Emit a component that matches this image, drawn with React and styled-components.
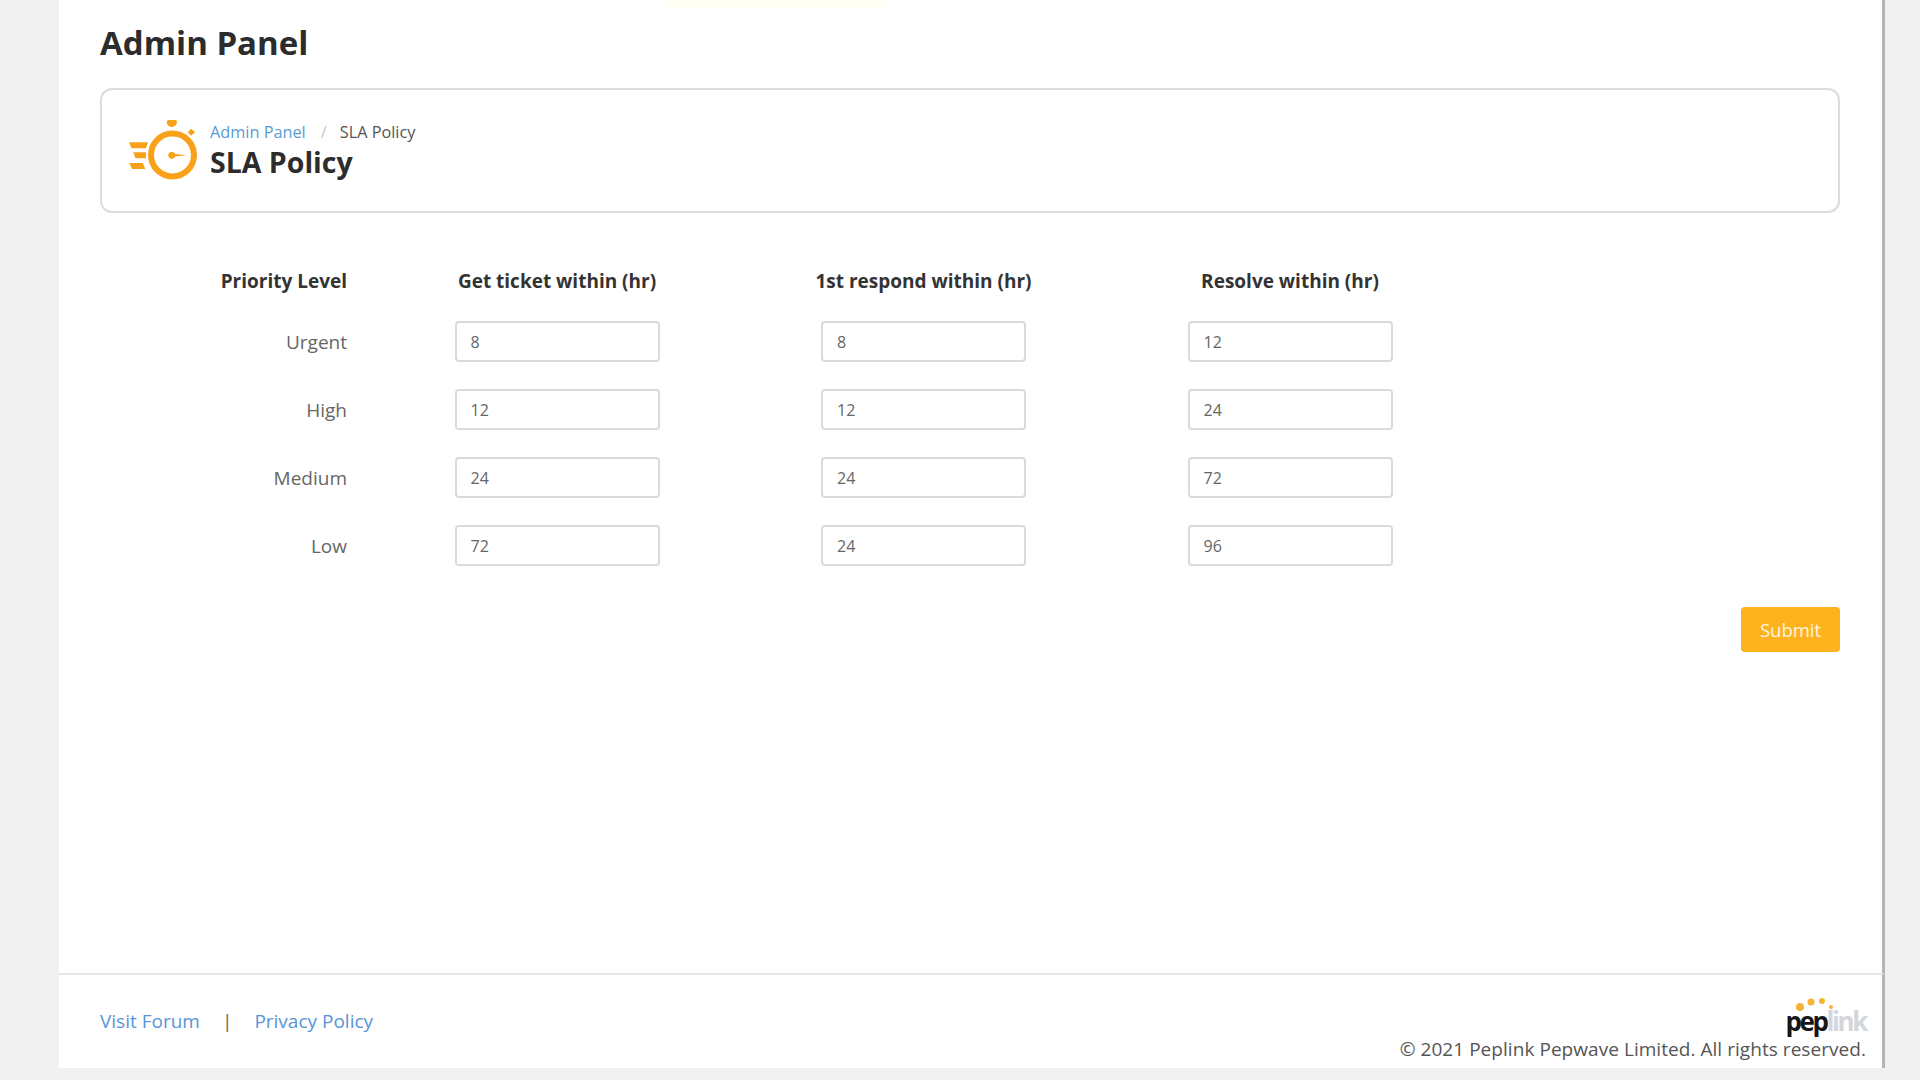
import React from 'react'
import styled, { createGlobalStyle } from 'styled-components'

const GlobalStyle = createGlobalStyle`
    html, body {
        margin: 0;
        padding: 0;
        background: #f1f1f1;
    }
    body {
        height: 1080px;
        overflow: hidden;
        font-family: "Open Sans", "Liberation Sans", sans-serif;
    }
    * {
        box-sizing: border-box;
    }
`

const Panel = styled.div`
    width: 1826px;
    margin-left: 59px;
    height: 1068px;
    display: flex;
    flex-direction: column;
    background: #fff;
`
const Main = styled.main`
    flex: 1;
    padding: 0 42px 0 41px;
    border-right: 3px solid #b4b4b4;
`
const PageTitle = styled.h1`
    margin: 0;
    height: 88px;
    line-height: 86px;
    font-size: 33px;
    font-weight: 700;
    color: #2c2c2c;
`
const HeaderCard = styled.section`
    height: 125px;
    display: flex;
    align-items: center;
    gap: 11px;
    padding: 0 0 2px 27px;
    border: 2px solid #dcdcdc;
    border-radius: 12px;
`
const IconSvg = styled.svg`
    width: 70px;
    height: 66px;
    margin-top: 3px;
    fill: #f9a11b;
`
const Breadcrumb = styled.div`
    display: flex;
    align-items: center;
    height: 24px;
    font-size: 16.300px;
    color: #555;

    a {
        color: #5a9bd5;
        text-decoration: none;
    }
    i {
        font-style: normal;
        color: #c8c8c8;
        margin: 0 13px 0 15px;
    }
`
const SectionTitle = styled.h2`
    margin: 0;
    font-size: 28.500px;
    line-height: 36px;
    font-weight: 700;
    color: #2c2c2c;
`
const Form = styled.form`
    padding-top: 56px;
    display: flex;
    flex-direction: column;
`
const Row = styled.div`
    display: flex;
    align-items: center;
    height: ${p => (p.$head ? '24px' : '41px')};
    margin-bottom: ${p => (p.$head ? '28px' : '27px')};
`
const RowLabel = styled.div`
    width: 247px;
    margin-right: 107.500px;
    text-align: right;
    font-size: 19px;
    font-weight: ${p => (p.$head ? 700 : 400)};
    color: ${p => (p.$head ? '#333' : '#666')};
`
const ColHead = styled.div`
    display: flex;
    justify-content: center;
    width: 205px;
    margin-right: 161.500px;
    font-size: 19px;
    font-weight: 700;
    white-space: nowrap;
    color: #333;
`
const HourInput = styled.input`
    width: 205px;
    height: 41px;
    margin-right: 161.500px;
    padding: 0 14px;
    border: 2px solid #dadada;
    border-radius: 4px;
    background: #fff;
    font-family: inherit;
    font-size: 16px;
    color: #666;
    outline: none;
`
const Actions = styled.div`
    display: flex;
    justify-content: flex-end;
    margin-top: 14px;
`
const SubmitButton = styled.button`
    width: 99px;
    height: 45px;
    border: 0;
    border-radius: 4px;
    background: #fdb21e;
    font-family: inherit;
    font-size: 18.500px;
    color: #fff6e0;
`
const Footer = styled.footer`
    height: 95px;
    display: flex;
    justify-content: space-between;
    padding: 0 16px 0 41px;
    border-top: 2px solid #e6e6e6;
    border-right: 3px solid #b4b4b4;
`
const FooterLinks = styled.div`
    display: flex;
    align-items: center;
    height: 94px;
    padding-bottom: 3px;
    font-size: 19px;
    color: #666;

    a {
        color: #5a94d8;
        text-decoration: none;
    }
    span {
        margin: 0 22px 0 22px;
    }
`
const FooterRight = styled.div`
    display: flex;
    flex-direction: column;
    align-items: flex-end;
    padding-top: 21px;
`
const Logo = styled.div`
    position: relative;
    width: 81px;
    height: 40px;
    font-size: 26px;
    font-weight: 700;
    letter-spacing: -2.400px;
    line-height: 32px;
    text-align: right;
    padding-top: 9px;
    white-space: nowrap;
    color: #161616;

    b {
        font-weight: 700;
        color: #d4d6da;
    }
    svg {
        position: absolute;
        left: 9px;
        top: 0;
    }
`
const Copyright = styled.div`
    font-size: 19px;
    letter-spacing: 0.050px;
    line-height: 26px;
    color: #555;
    white-space: nowrap;
`
const TopSmudge = styled.div`
    position: absolute;
    left: 668px;
    top: 0;
    width: 218px;
    height: 9px;
    background: #fffff6;
`

const rows = [
    ['Urgent', 8, 8, 12],
    ['High', 12, 12, 24],
    ['Medium', 24, 24, 72],
    ['Low', 72, 24, 96]
]

function StopwatchIcon() {
    return (
        <IconSvg viewBox="0 0 70 66">
            <circle cx="43.500" cy="37" r="21.500" fill="none" stroke="#f9a11b" strokeWidth="6" />
            <path d="M39 2h7.500c1 0 1.500 1 1.500 2 0 2.500-2.500 5-5.300 5s-5-2.500-5-5c0-1 .8-2 1.800-2z" />
            <path d="M62.300 10.800l3.700 3.500-3.700 3.500-3.600-3.500z" />
            <path d="M0 24.300h19l-2 6H2.500z" />
            <path d="M4.300 34.300H17v6H6.500z" />
            <path d="M.3 45h13.500l2.500 6H3z" />
            <path d="M42.700 33.800c1.600 0 2.900 1 3.500 2.300l11.500 1.200-11.500 1.200c-.6 1.300-1.900 2.300-3.500 2.300-2 0-3.500-1.600-3.500-3.500s1.500-3.500 3.500-3.500z" />
        </IconSvg>
    )
}

function App() {
    return (
        <>
            <GlobalStyle />
            <TopSmudge />
            <Panel>
                <Main>
                    <PageTitle>Admin Panel</PageTitle>
                    <HeaderCard>
                        <StopwatchIcon />
                        <div>
                            <Breadcrumb>
                                <a href="#forum">Admin Panel</a>
                                <i>/</i>
                                <span>SLA Policy</span>
                            </Breadcrumb>
                            <SectionTitle>SLA Policy</SectionTitle>
                        </div>
                    </HeaderCard>
                    <Form onSubmit={e => e.preventDefault()}>
                        <Row $head>
                            <RowLabel $head>Priority Level</RowLabel>
                            <ColHead>Get ticket within (hr)</ColHead>
                            <ColHead>1st respond within (hr)</ColHead>
                            <ColHead>Resolve within (hr)</ColHead>
                        </Row>
                        {rows.map(([label, ...hours]) => (
                            <Row key={label}>
                                <RowLabel>{label}</RowLabel>
                                {hours.map((h, i) => (
                                    <HourInput key={i} defaultValue={h} />
                                ))}
                            </Row>
                        ))}
                        <Actions>
                            <SubmitButton type="submit">Submit</SubmitButton>
                        </Actions>
                    </Form>
                </Main>
                <Footer>
                    <FooterLinks>
                        <a href="#forum">Visit Forum</a>
                        <span>|</span>
                        <a href="#privacy">Privacy Policy</a>
                    </FooterLinks>
                    <FooterRight>
                        <Logo>
                            <svg width="46" height="18" viewBox="0 0 46 18" fill="#f5b33a">
                                <circle cx="6" cy="11" r="4" />
                                <circle cx="17" cy="6" r="3.500" />
                                <circle cx="28" cy="5" r="3" />
                                <circle cx="37" cy="11" r="2" />
                            </svg>
                            pep<b>link</b>
                        </Logo>
                        <Copyright>© 2021 Peplink Pepwave Limited. All rights reserved.</Copyright>
                    </FooterRight>
                </Footer>
            </Panel>
        </>
    )
}

export default App
